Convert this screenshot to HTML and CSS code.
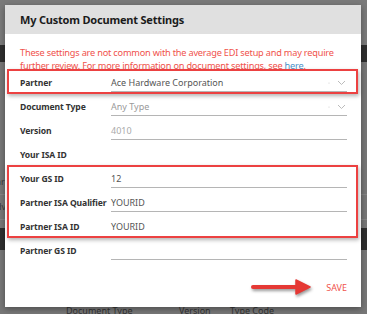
FILE: index.html
```html
<!DOCTYPE html>
<html>
<head>
  <meta charset="UTF-8" />
  <link rel="stylesheet" href="styles.css">
</head>
<body>
  <div class="page">
    <div class="page-top"></div>
    <div class="page-band"></div>
    <div class="page-rows">
      <div class="page-row">ar</div>
      <div class="page-row">dv</div>
    </div>
    <div class="page-band page-band-low"></div>
    <div class="page-cols">
      <span class="col-doc">Document Type</span>
      <span class="col-ver">Version</span>
      <span class="col-type">Type Code</span>
    </div>
  </div>

  <div class="dialog">
    <div class="dialog-header">
      <h3>My Custom Document Settings</h3>
    </div>

    <div class="dialog-body">
      <p class="warning">These settings are not common with the average EDI setup and may require further review. For more information on document settings, see <a href="#">here</a>.</p>

      <div class="group marked">
        <div class="row">
          <label>Partner</label>
          <div class="field select">
            <span class="value">Ace Hardware Corporation</span>
            <svg class="chev" width="20" height="8" viewBox="0 0 20 8"><circle cx="2" cy="4" r="0.6" fill="#ccc"/><path d="M11 2 L14.5 5.5 L18 2" fill="none" stroke="#bbb" stroke-width="1"/></svg>
          </div>
        </div>
      </div>

      <div class="group">
        <div class="row">
          <label>Document Type</label>
          <div class="field select">
            <span class="value muted">Any Type</span>
            <svg class="chev" width="20" height="8" viewBox="0 0 20 8"><circle cx="2" cy="4" r="0.6" fill="#ccc"/><path d="M11 2 L14.5 5.5 L18 2" fill="none" stroke="#bbb" stroke-width="1"/></svg>
          </div>
        </div>
        <div class="row">
          <label>Version</label>
          <div class="field"><span class="value faint">4010</span></div>
        </div>
        <div class="row">
          <label>Your ISA ID</label>
          <div class="field plain"></div>
        </div>
      </div>

      <div class="group marked">
        <div class="row">
          <label>Your GS ID</label>
          <div class="field"><span class="value">12</span></div>
        </div>
        <div class="row">
          <label>Partner ISA Qualifier</label>
          <div class="field"><span class="value">YOURID</span></div>
        </div>
        <div class="row">
          <label>Partner ISA ID</label>
          <div class="field plain"><span class="value">YOURID</span></div>
        </div>
      </div>

      <div class="group">
        <div class="row">
          <label>Partner GS ID</label>
          <div class="field"></div>
        </div>
      </div>

      <div class="footer">
        <svg class="arrow" width="62" height="20" viewBox="0 0 62 20">
          <path d="M2 10 L48 10" stroke="#e53935" stroke-width="4" stroke-linecap="round"/>
          <path d="M45 3 L59 10 L45 17 Z" fill="#e53935" stroke="#e53935" stroke-width="1.5" stroke-linejoin="round"/>
        </svg>
        <button class="btn-save">SAVE</button>
      </div>
    </div>
  </div>
</body>
</html>
```

FILE: styles.css
```css
body {
  margin: 0;
  width: 367px;
  height: 314px;
  overflow: hidden;
  background: #777777;
  font-family: "Noto Sans", sans-serif;
  position: relative;
}

.page {
  height: 314px;
  display: flex;
  flex-direction: column;
}

.page-top {
  height: 45px;
  background: #7a7a7a;
}

.page-band {
  height: 17px;
  background: #2e2e2e;
}

.page-rows {
  padding-top: 108px;
  height: 58px;
}

.page-row {
  height: 24px;
  font-size: 9px;
  line-height: 24px;
  color: #3a3a3a;
  border-bottom: 1px solid #858585;
  margin-left: -4px;
}

.page-band-low {
  height: 22px;
  background: #2e2e2e;
}

.page-cols {
  flex: 1;
  position: relative;
  font-size: 9px;
  color: #333;
}

.page-cols span {
  position: absolute;
  bottom: -3px;
}

.col-doc { left: 66px; }
.col-ver { left: 179px; }
.col-type { left: 230px; }

.dialog {
  position: absolute;
  left: 5px;
  top: 5px;
  width: 356px;
  height: 302px;
  background: #ffffff;
  box-shadow: 0 2px 6px rgba(0, 0, 0, 0.35);
}

.dialog-header {
  height: 29px;
  background: #e0e0e0;
  padding-left: 15px;
  display: flex;
  align-items: center;
}

.dialog-header h3 {
  margin: 0;
  font-size: 11px;
  letter-spacing: -0.2px;
  font-weight: 700;
  color: #1b1b1b;
}

.warning {
  margin: 12px 10px 0 15px;
  font-size: 9.2px;
  letter-spacing: -0.2px;
  line-height: 13px;
  color: #f0524c;
  height: 25px;
}

.warning a {
  color: #4a90c8;
  text-decoration: none;
}

.group {
  position: relative;
}

.marked::after {
  content: "";
  position: absolute;
  left: 2px;
  right: 3px;
  top: -2px;
  bottom: 1px;
  border: 2px solid #ec4141;
  box-shadow: 1px 2px 4px rgba(0, 0, 0, 0.3);
  pointer-events: none;
}

.row {
  height: 24px;
  display: flex;
  align-items: flex-start;
  padding: 0 14px 0 15px;
}

.row label {
  width: 91px;
  flex: none;
  font-size: 8.6px;
  letter-spacing: -0.1px;
  white-space: nowrap;
  font-weight: 700;
  color: #333;
  line-height: 24px;
}

.field {
  flex: 1;
  height: 21px;
  border-bottom: 1px solid #b5b5b5;
  display: flex;
  align-items: center;
  justify-content: space-between;
  padding-top: 3px;
  box-sizing: border-box;
}

.field.plain {
  border-bottom-color: transparent;
}

.value {
  font-size: 9px;
  color: #555;
}

.value.muted {
  color: #9a9a9a;
}

.value.faint {
  color: #aaaaaa;
}

.footer {
  display: flex;
  justify-content: flex-end;
  align-items: center;
  padding: 14px 14px 0 0;
  gap: 13px;
}

.arrow {
  filter: drop-shadow(1px 2px 1.5px rgba(0, 0, 0, 0.4));
}

.btn-save {
  background: none;
  border: none;
  padding: 0;
  font-family: "Noto Sans", sans-serif;
  font-size: 9px;
  color: #f0524c;
  cursor: pointer;
}
```
